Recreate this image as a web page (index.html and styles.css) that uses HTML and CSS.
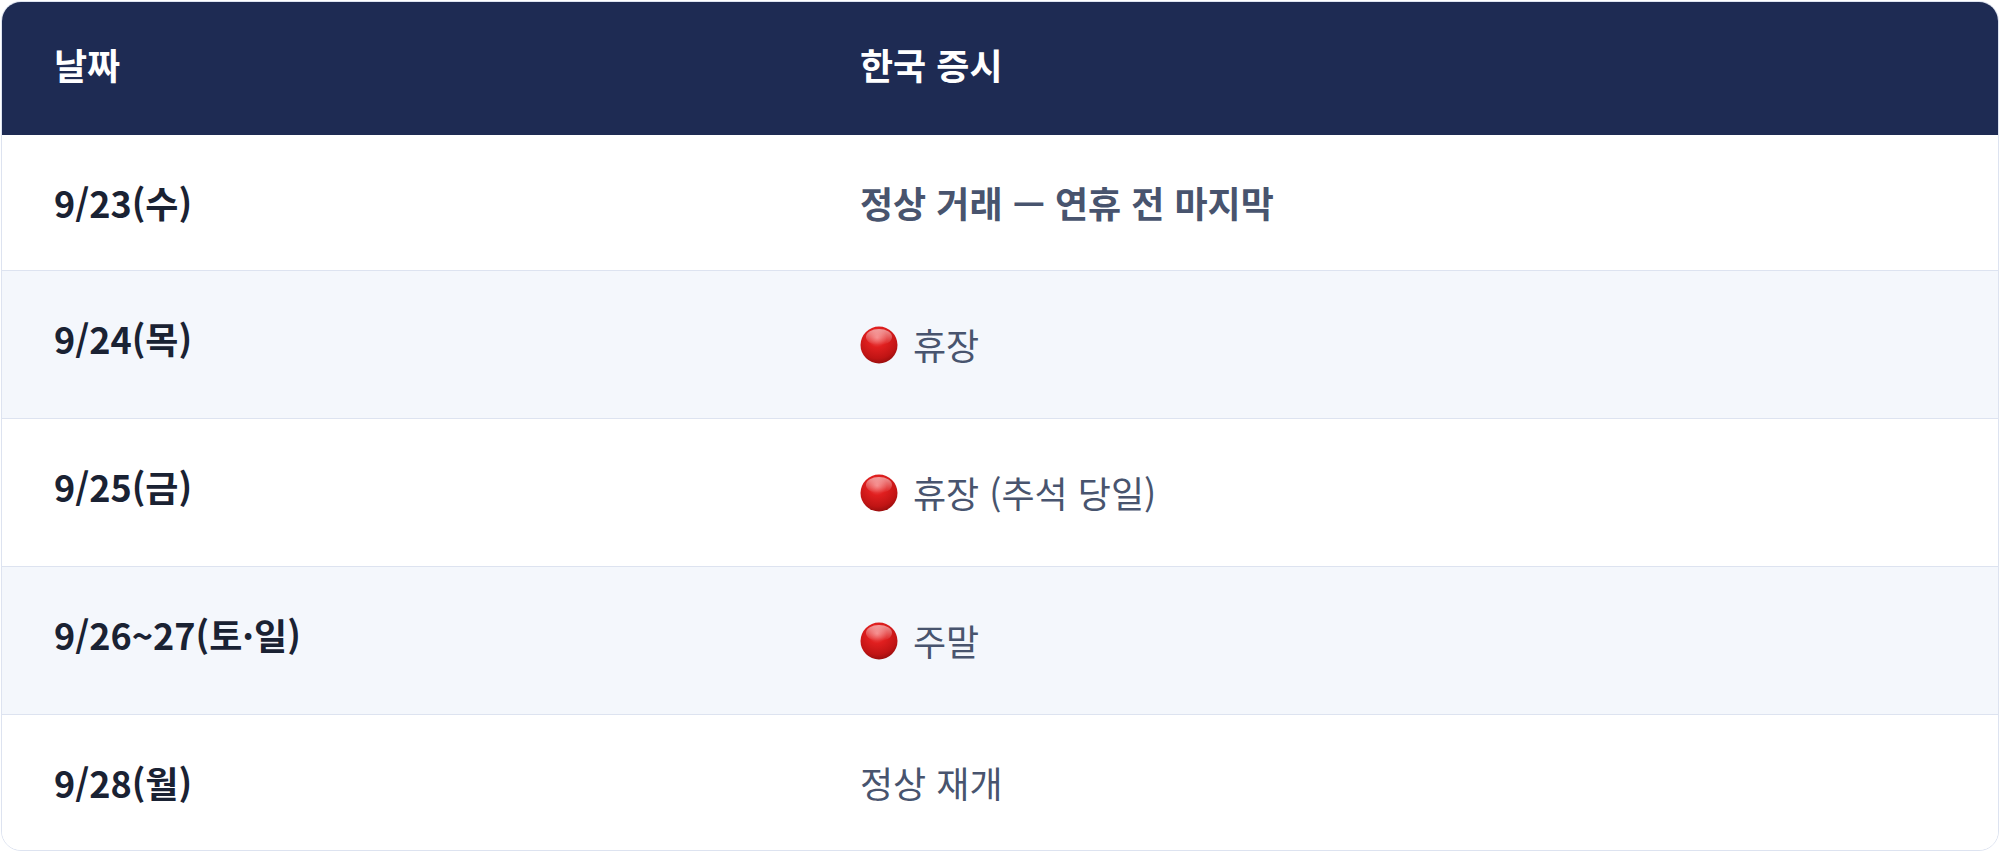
FILE: index.html
```html
<!DOCTYPE html>
<html lang="ko">
<head>
<meta charset="utf-8">
<link rel="stylesheet" href="styles.css">
</head>
<body>
<div class="page">
  <div class="table">
    <div class="row head">
      <div class="cell">날짜</div>
      <div class="cell">한국 증시</div>
    </div>
    <div class="row">
      <div class="cell date">9/23(수)</div>
      <div class="cell status strong">정상 거래 — 연휴 전 마지막</div>
    </div>
    <div class="row alt">
      <div class="cell date">9/24(목)</div>
      <div class="cell status closed"><svg class="dot" viewBox="0 0 38 38"><use href="#reddot"/></svg><span>휴장</span></div>
    </div>
    <div class="row">
      <div class="cell date">9/25(금)</div>
      <div class="cell status closed"><svg class="dot" viewBox="0 0 38 38"><use href="#reddot"/></svg><span>휴장 (추석 당일)</span></div>
    </div>
    <div class="row alt">
      <div class="cell date">9/26~27(토·일)</div>
      <div class="cell status closed"><svg class="dot" viewBox="0 0 38 38"><use href="#reddot"/></svg><span>주말</span></div>
    </div>
    <div class="row last">
      <div class="cell date">9/28(월)</div>
      <div class="cell status">정상 재개</div>
    </div>
  </div>
</div>
<svg width="0" height="0" class="defs">
  <defs>
    <radialGradient id="rg" cx="0.45" cy="0.3" r="0.75">
      <stop offset="0" stop-color="#f46a6a"/>
      <stop offset="0.35" stop-color="#e01f1f"/>
      <stop offset="0.75" stop-color="#c01414"/>
      <stop offset="1" stop-color="#8e0c0c"/>
    </radialGradient>
    <linearGradient id="hl" x1="0" y1="0" x2="0" y2="1">
      <stop offset="0" stop-color="#ffffff" stop-opacity="0.55"/>
      <stop offset="1" stop-color="#ffffff" stop-opacity="0"/>
    </linearGradient>
    <g id="reddot">
      <circle cx="19" cy="19" r="18.5" fill="url(#rg)"/>
      <ellipse cx="19" cy="11" rx="13" ry="8" fill="url(#hl)"/>
    </g>
  </defs>
</svg>
</body>
</html>
```

FILE: styles.css
```css
html, body {
  margin: 0;
  padding: 0;
  background: #ffffff;
}

body {
  font-family: "Noto Sans CJK KR", "Noto Sans", sans-serif;
}

.page {
  padding: 1px 1px 0 1px;
}

.defs {
  position: absolute;
  width: 0;
  height: 0;
}

.table {
  border: 1px solid #dde3f0;
  border-radius: 20px;
  overflow: hidden;
  background: #ffffff;
}

.row {
  display: grid;
  grid-template-columns: 806px 1fr;
  border-bottom: 1px solid #dde3f0;
  background: #ffffff;
}

.row.alt {
  background: #f4f7fc;
}

.row.last {
  border-bottom: none;
}

.row.head {
  background: #1e2b53;
  border-bottom: none;
}

.cell {
  padding: 42px 52px;
  line-height: 51px;
  font-size: 36px;
}

.head .cell {
  color: #ffffff;
  font-weight: 700;
  font-size: 36px;
  line-height: 49px;
  padding: 38px 52px 46px;
}

.date {
  color: #1a2233;
  font-weight: 700;
}

.status {
  color: #48546e;
  font-weight: 400;
}

.status.strong {
  font-weight: 700;
}

.status.closed {
  display: flex;
  align-items: center;
  gap: 15px;
  height: 63px;
  line-height: 63px;
}

.dot {
  width: 38px;
  height: 38px;
  flex: none;
}
```
